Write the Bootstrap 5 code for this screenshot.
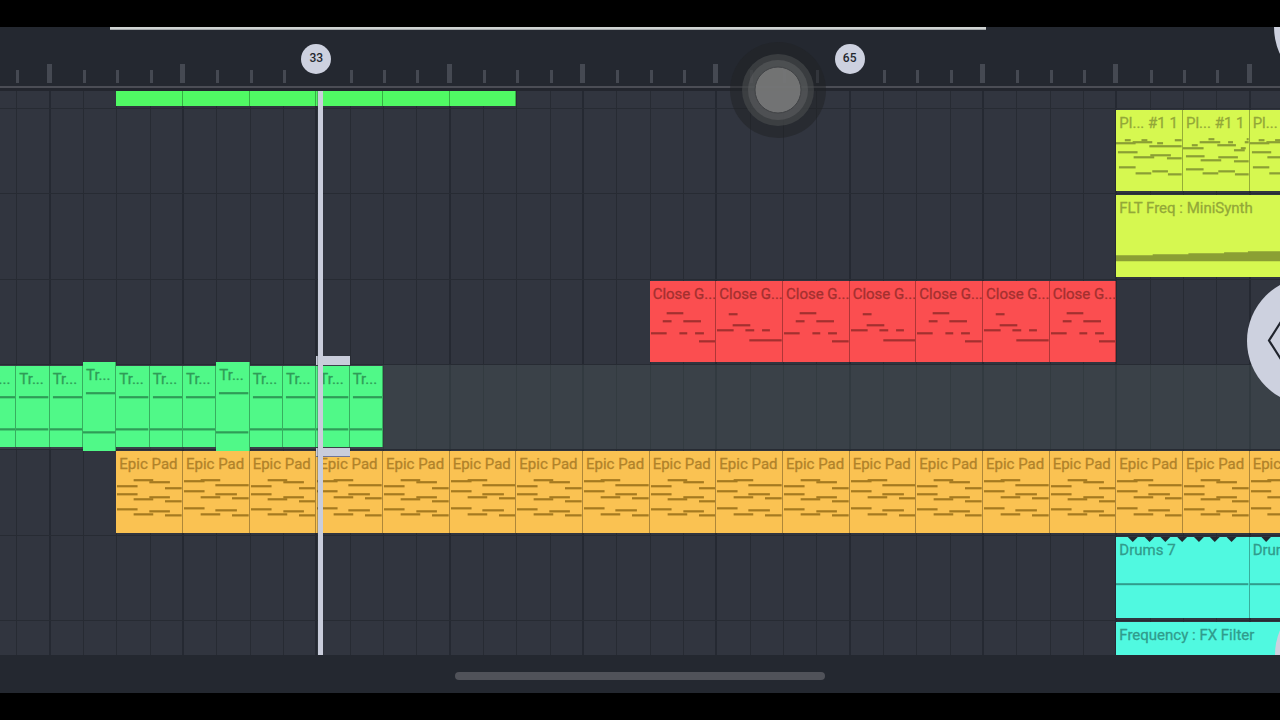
<!DOCTYPE html>
<html lang="en">
<head>
<meta charset="utf-8">
<meta name="viewport" content="width=device-width, initial-scale=1">
<title>Playlist</title>
<link href="https://cdn.jsdelivr.net/npm/bootstrap@5.3.0/dist/css/bootstrap.min.css" rel="stylesheet">
<style>
  body { background: #000; font-family: Roboto, "Liberation Sans", sans-serif; }
  .app { padding: 27px 0; }
  .studio { background: #242830; }
  .steps { display: grid; grid-template-columns: repeat(39, minmax(0, 1fr)); margin: 0 -3px 0 -17px; }

  /* ruler */
  .ruler { height: 64px; border-bottom: 3px solid #23262e; }
  .loop-bar { height: 3px; margin: 0 23% 0 110px; background: linear-gradient(#cfd3d3 67%, #a3a8aa 67%); }
  .ruler .steps { height: 56px; padding-bottom: 3px; align-items: end; }
  .ruler-edge { height: 2px; background: #4b4d55; }
  .tick { width: 3px; height: 13px; background: #454952; }
  .tick-major { width: 5px; height: 19px; margin-left: -3px; }
  .bar-mark { width: 30px; height: 30px; margin: 0 0 9px -15px; border-radius: 50%; background: #cdd1df; color: #23262d;
    font-size: 12px; line-height: 29px; font-weight: 500; text-align: center; }

  /* tracks */
  .playlist { background: #31353f; }
  .step-lines > i { border-left: 1px solid #272b33; }
  .step-lines > i.bar-line { border-left: 2px solid #252932; margin-left: -1px; }
  .track { position: relative; padding: 1px 0 2px; border-top: 1px solid #272b33; flex: 1 1 0; min-height: 0; }
  .track-first { flex: 0 0 17px; border-top: 0; padding: 0 0 2px; }
  .track-last { flex: 0 0 35px; padding-bottom: 0; }
  .track-picked { background: rgba(74, 88, 90, .36); }
  .track > .steps { height: 100%; grid-template-rows: minmax(0, 1fr); }
  .clip { position: relative; grid-row: 1; overflow: hidden; background: var(--tone); border-right: 1px solid rgba(0, 0, 0, .3);
    color: var(--ink); fill: var(--ink); }
  .clip svg { position: absolute; inset: 0; width: 100%; height: 100%; }
  .clip-name { display: block; padding: 3px 0 0 3px; font-size: 15px; line-height: 20px; font-weight: 400; white-space: nowrap;
    -webkit-text-stroke: .3px currentColor; }
  .clip-raised { margin: -4px 0; z-index: 3; }
  .grass { --tone: #50f964; --ink: #2c9742; }
  .green { --tone: #50f988; --ink: #2f9c57; }
  .lime  { --tone: #d6f850; --ink: #8b9f34; }
  .red   { --tone: #fb4e50; --ink: #a3302f; }
  .amber { --tone: #fac252; --ink: #a57a20; }
  .aqua  { --tone: #50f9e0; --ink: #309c8c; }
  .amber .clip-name { color: #b1822a; }
  .lime .clip-name { color: #93a838; }
  .grip { grid-row: 1; grid-column: 11; height: 9px; background: #c9cddb; z-index: 4; }
  .grip-top { margin-top: -10px; }
  .grip-bottom { align-self: end; margin-bottom: -10px; border-bottom: 1px solid #6f7596; }

  /* items lying over the playlist */
  .playhead { grid-column: 11; width: 5px; margin-left: 2px; background: #c9cddb; box-shadow: -1px 0 rgba(40, 50, 50, .3); }
  .overlay { position: absolute; inset: 0; pointer-events: none; z-index: 6; }
  .side-btn { position: absolute; width: 128px; height: 128px; padding: 0; border: 0; border-radius: 50%; background: #cdd1df; z-index: 7; }
  .side-top { right: -122px; top: -64px; }
  .side-mid { right: -95px; top: 186px; }
  .side-low { right: -123px; bottom: -64px; }
  .touch { position: absolute; left: 730px; top: 15px; width: 96px; height: 96px; z-index: 9; pointer-events: none; }
  .foot { height: 38px; }
  .home-bar { width: 370px; height: 8px; border-radius: 4px; background: #505259; margin-top: 4px; }
</style>
</head>
<body>
<div class="app vh-100 d-flex flex-column overflow-hidden">
  <main class="studio position-relative flex-grow-1 d-flex flex-column overflow-hidden">
    <header class="ruler flex-shrink-0 overflow-hidden">
      <div class="loop-bar"></div>
      <div class="steps" id="ticks"></div>
      <div class="ruler-edge"></div>
    </header>
    <section class="playlist position-relative flex-grow-1 d-flex flex-column overflow-hidden" aria-label="Playlist">
      <div class="overlay steps step-lines z-0" id="lines"></div>
      <div id="tracks" class="d-flex flex-column flex-grow-1"></div>
      <div class="overlay steps"><div class="playhead"></div></div>
      <button type="button" class="side-btn side-mid" aria-label="Open panel">
        <svg width="128" height="128" viewBox="0 0 128 128"><path d="M37 40 22 63.500 37 87" fill="none" stroke="#20242d" stroke-width="2.200"/></svg>
      </button>
      <button type="button" class="side-btn side-low" aria-label="Add"></button>
    </section>
    <button type="button" class="side-btn side-top" aria-label="Menu"></button>
    <footer class="foot flex-shrink-0 d-flex align-items-center justify-content-center"><div class="home-bar"></div></footer>
    <svg class="touch" viewBox="0 0 96 96" aria-hidden="true">
      <circle cx="48" cy="48" r="48" fill="#202224" fill-opacity=".5"/>
      <circle cx="48" cy="48" r="36" fill="#4a4c4e" fill-opacity=".6"/>
      <circle cx="48" cy="48" r="30" fill="#606163" fill-opacity=".5"/>
      <circle cx="48" cy="48" r="23" fill="#858586" fill-opacity=".66" stroke="#404245" stroke-width="1"/>
    </svg>
  </main>
</div>
<script src="https://cdn.jsdelivr.net/npm/bootstrap@5.3.0/dist/js/bootstrap.bundle.min.js"></script>
<script>
  // Notes of each pattern: [start, end, y] inside a 67 x 81 clip
  const notes = {
    limeA: [[9,15,30],[26,32,30],[60,67,30],[0,20,33],[17,37,32],[42,48,33],[34,67,36],[2,22,42],[35,56,45],[18,39,47],[52,67,48],[3,20,57],[37,53,61],[20,36,63],[53,67,64]],
    limeB: [[9,15,35],[0,21,38],[17,38,32],[26,32,29],[35,54,35],[46,51,32],[52,63,40],[59,64,38],[63,67,32],[65,67,29],[3,22,46],[18,39,50],[36,56,47],[52,67,51],[3,21,59],[20,36,63],[36,53,61],[53,67,64]],
    redA: [[17,34,32],[13,22,40],[34,52,40],[1,17,52],[30,38,52],[46,55,52],[50,67,60]],
    redB: [[13,22,33],[17,35,44],[1,18,49],[30,39,49],[47,55,49],[34,67,59]],
    padA: [[18,38,29],[34,55,31],[1,22,35],[50,67,37],[1,22,43],[34,55,46],[18,38,48],[50,67,50],[1,22,58],[34,55,60],[18,38,63],[50,67,64]],
    padB: [[1,22,30],[18,38,29],[33,67,34],[1,22,40],[33,55,43],[18,38,46],[50,67,47],[1,22,57],[33,55,59],[18,38,63],[50,67,64]]
  };
  const svg = (w, body, h = 81) => `<svg viewBox="0 0 ${w} ${h}" preserveAspectRatio="none" aria-hidden="true">${body}</svg>`;
  const bars = (list, w = 67) => svg(w, list.map(([a, b, y]) => `<rect x="${a}" y="${y - 1}" width="${b - a}" height="2.200"/>`).join(''));
  const clip = (tone, start, span, name, art = '', extra = '') =>
    `<div class="clip ${tone} ${extra}" style="grid-column:${start + 1} / span ${span}">${art}<span class="clip-name position-relative">${name}</span></div>`;
  const series = (from, count, step, make) => Array.from({ length: count }, (_, i) => make(from + i * step, i)).join('');
  // Two-step pattern clips, alternating between two variants; the last one is cut by the view's end
  const patterns = (tone, from, count, name, a, b) => series(from, count, 2, (n, i) => {
    const span = Math.min(2, 39 - n);
    return clip(tone, n, span, name, bars(i % 2 ? notes[b] : notes[a], span * 33.5));
  });

  const notch = x => `<path fill="#242830" d="M${x - 5} 0h10l-5 5z"/>`;
  const wave = w => `<rect y="46" width="${w}" height="2"/>`;
  const rows = [
    ['track-first', series(4, 6, 2, n => clip('grass', n, 2, ''))],
    ['', patterns('lime', 34, 3, 'Pl... #1 1', 'limeA', 'limeB')],
    ['', clip('lime', 34, 5, 'FLT Freq : MiniSynth', svg(167, '<path d="M0 60H37V59H73V58H109V57H133V56H167V66H0z"/>'))],
    ['', patterns('red', 20, 7, 'Close G...', 'redA', 'redB')],
    ['track-picked', series(0, 12, 1, n => {
      const raised = n === 3 || n === 7;
      const art = svg(33, `<rect x="3" y="30" width="30" height="2.200"/><rect y="${raised ? 69 : 62}" width="33" height="2.200"/>`, raised ? 89 : 81);
      return clip('green', n, 1, 'Tr...', art, raised ? 'clip-raised' : '');
    }) + '<div class="grip grip-top"></div><div class="grip grip-bottom"></div>'],
    ['', patterns('amber', 4, 18, 'Epic Pad', 'padA', 'padB')],
    ['', clip('aqua', 34, 4, 'Drums 7', svg(134, wave(134) + [17, 34, 50, 67, 84, 100, 117].map(notch).join('')))
       + clip('aqua', 38, 1, 'Drums 7', svg(34, wave(34) + notch(17)))],
    ['track-last', clip('aqua', 34, 5, 'Frequency : FX Filter')]
  ];
  document.getElementById('tracks').innerHTML =
    rows.map(([kind, clips]) => `<div class="track ${kind}"><div class="steps">${clips}</div></div>`).join('');
  document.getElementById('lines').innerHTML =
    series(0, 39, 1, n => `<i class="${n % 4 === 2 ? 'bar-line' : ''}"></i>`);
  document.getElementById('ticks').innerHTML = series(0, 39, 1, n =>
    n === 10 ? '<span class="bar-mark">33</span>' : n === 26 ? '<span class="bar-mark">65</span>'
      : `<span class="tick ${n % 4 === 2 ? 'tick-major' : ''}"></span>`);
</script>
</body>
</html>
